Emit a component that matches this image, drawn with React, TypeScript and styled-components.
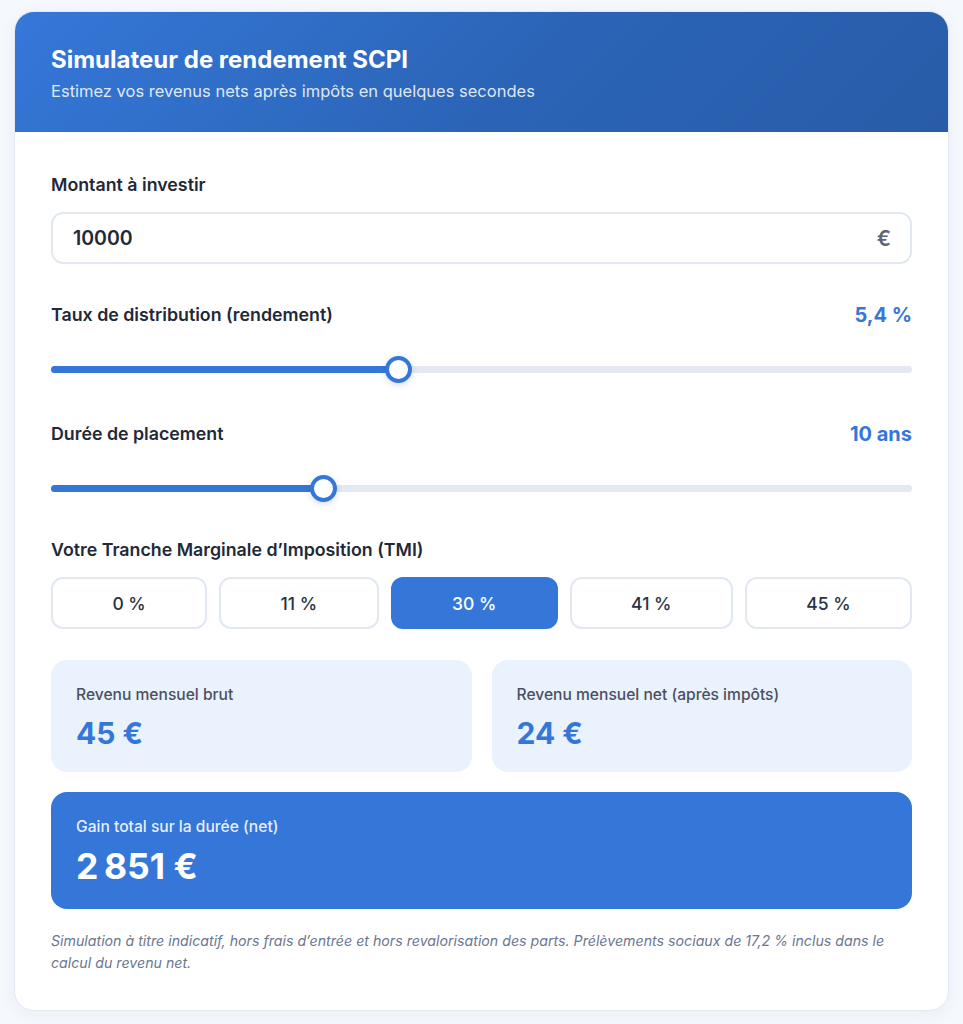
import React, { useState } from "react";
import styled, { createGlobalStyle } from "styled-components";

const Global = createGlobalStyle`
  html, body { margin: 0; padding: 0; }
  body {
    background: #f5f8fd;
    font-family: Inter, "Noto Sans", "Liberation Sans", sans-serif;
    color: #1f2937;
    -webkit-font-smoothing: antialiased;
  }
  * { box-sizing: border-box; }
`;

const Page = styled.div`
  padding: 11px 14px 14px 14px;
`;

const Card = styled.div`
  background: #ffffff;
  border: 1px solid #e3e9f3;
  border-radius: 20px;
  overflow: hidden;
  box-shadow: 0 4px 18px rgba(30, 60, 120, 0.05);
`;

const Header = styled.header`
  background: linear-gradient(135deg, #3578d9 0%, #2b64b6 55%, #285ca8 100%);
  padding: 33px 36px 30px;
  color: #fff;
`;

const Title = styled.h1`
  margin: 0;
  font-size: 24px;
  line-height: 30px;
  font-weight: 700;
`;

const Subtitle = styled.p`
  margin: 5px 0 0;
  font-size: 16.5px;
  line-height: 22px;
  color: rgba(255, 255, 255, 0.86);
`;

const Body = styled.div`
  padding: 41px 36px 36px;
  display: flex;
  flex-direction: column;
`;

const Section = styled.section<{ $mt?: number }>`
  margin-top: ${(p) => p.$mt ?? 0}px;
`;

const Label = styled.div`
  font-size: 17.8px;
  line-height: 24px;
  font-weight: 600;
  color: #1f2937;
`;

const LabelRow = styled.div`
  display: flex;
  align-items: center;
  justify-content: space-between;
  height: 26px;
`;

const Value = styled.div`
  font-size: 20px;
  font-weight: 700;
  color: #3577d8;
`;

const InputBox = styled.div`
  margin-top: 15px;
  height: 52px;
  border: 2px solid #e2e8f3;
  border-radius: 12px;
  display: flex;
  align-items: center;
  padding: 0 19px 0 20px;
`;

const Input = styled.input`
  flex: 1;
  border: none;
  outline: none;
  background: transparent;
  font-family: inherit;
  font-size: 19.5px;
  font-weight: 600;
  color: #1f2937;
  padding: 0;
`;

const Suffix = styled.span`
  font-size: 21px;
  font-weight: 600;
  color: #5b6475;
`;

const SliderWrap = styled.div`
  position: relative;
  margin-top: 28px;
  height: 26px;
  display: flex;
  align-items: center;
`;

const Track = styled.div`
  position: relative;
  width: 100%;
  height: 7px;
  border-radius: 4px;
  background: #e4e8f0;
`;

const Fill = styled.div`
  position: absolute;
  left: 0;
  top: 0;
  bottom: 0;
  border-radius: 4px;
  background: #3577d8;
`;

const Thumb = styled.div`
  position: absolute;
  top: 50%;
  width: 27px;
  height: 27px;
  margin-left: -13.5px;
  margin-top: -13.5px;
  border-radius: 50%;
  background: #fff;
  border: 4px solid #3577d8;
  box-shadow: 0 2px 6px rgba(30, 60, 120, 0.18);
`;

const Options = styled.div`
  margin-top: 15px;
  display: flex;
  gap: 12px;
`;

const Option = styled.button<{ $active?: boolean }>`
  flex: 1 1 auto;
  height: 52px;
  border-radius: 12px;
  border: 2px solid ${(p) => (p.$active ? "#3577d8" : "#e2e8f3")};
  background: ${(p) => (p.$active ? "#3577d8" : "#ffffff")};
  color: ${(p) => (p.$active ? "#ffffff" : "#2a3140")};
  font-family: inherit;
  font-size: 17.5px;
  font-weight: 500;
  cursor: pointer;
`;

const Results = styled.div`
  margin-top: 31px;
  display: grid;
  grid-template-columns: 1fr 1fr;
  gap: 20px;
`;

const ResultCard = styled.div`
  background: #eaf2fd;
  border-radius: 16px;
  padding: 24px 25px 22px;
  height: 112px;
`;

const ResultLabel = styled.div<{ $light?: boolean }>`
  font-size: 15.6px;
  line-height: 22px;
  font-weight: 500;
  color: ${(p) => (p.$light ? "rgba(255,255,255,0.9)" : "#4a5060")};
`;

const ResultValue = styled.div`
  margin-top: 8px;
  font-size: 30px;
  line-height: 38px;
  font-weight: 700;
  color: #3577d8;
`;

const TotalCard = styled.div`
  margin-top: 20px;
  background: #3577d8;
  border-radius: 16px;
  padding: 24px 25px 22px;
  height: 117px;
`;

const TotalValue = styled.div`
  margin-top: 6px;
  font-size: 35.5px;
  line-height: 46px;
  font-weight: 700;
  color: #fff;
`;

const Note = styled.p`
  margin: 21px 0 0;
  font-size: 14.2px;
  line-height: 22px;
  font-style: italic;
  color: #6b7791;
`;

function Slider({ min, max, value }: { min: number; max: number; value: number }) {
  const frac = (value - min) / (max - min);
  const pos = `calc(13.5px + (100% - 27px) * ${frac})`;
  return (
    <SliderWrap>
      <Track>
        <Fill style={{ width: pos }} />
        <Thumb style={{ left: pos }} />
      </Track>
    </SliderWrap>
  );
}

export default function App() {
  const [tmi, setTmi] = useState(30);
  const [amount, setAmount] = useState("10000");
  return (
    <Page>
      <Global />
      <Card>
        <Header>
          <Title>Simulateur de rendement SCPI</Title>
          <Subtitle>Estimez vos revenus nets après impôts en quelques secondes</Subtitle>
        </Header>
        <Body>
          <Section>
            <Label>Montant à investir</Label>
            <InputBox>
              <Input value={amount} onChange={(e) => setAmount(e.target.value)} />
              <Suffix>€</Suffix>
            </InputBox>
          </Section>
          <Section $mt={38}>
            <LabelRow>
              <Label>Taux de distribution (rendement)</Label>
              <Value>5,4 %</Value>
            </LabelRow>
            <Slider min={1} max={12} value={5.4} />
          </Section>
          <Section $mt={39}>
            <LabelRow>
              <Label>Durée de placement</Label>
              <Value>10 ans</Value>
            </LabelRow>
            <Slider min={1} max={30} value={10} />
          </Section>
          <Section $mt={37}>
            <Label>Votre Tranche Marginale d’Imposition (TMI)</Label>
            <Options>
              {[0, 11, 30, 41, 45].map((t) => (
                <Option key={t} $active={t === tmi} onClick={() => setTmi(t)}>
                  {t} %
                </Option>
              ))}
            </Options>
          </Section>
          <Results>
            <ResultCard>
              <ResultLabel>Revenu mensuel brut</ResultLabel>
              <ResultValue>45 €</ResultValue>
            </ResultCard>
            <ResultCard>
              <ResultLabel>Revenu mensuel net (après impôts)</ResultLabel>
              <ResultValue>24 €</ResultValue>
            </ResultCard>
          </Results>
          <TotalCard>
            <ResultLabel $light>Gain total sur la durée (net)</ResultLabel>
            <TotalValue>2{"\u202F"}851 €</TotalValue>
          </TotalCard>
          <Note>
            Simulation à titre indicatif, hors frais d’entrée et hors revalorisation des parts. Prélèvements
            sociaux de 17,2 % inclus dans le calcul du revenu net.
          </Note>
        </Body>
      </Card>
    </Page>
  );
}
